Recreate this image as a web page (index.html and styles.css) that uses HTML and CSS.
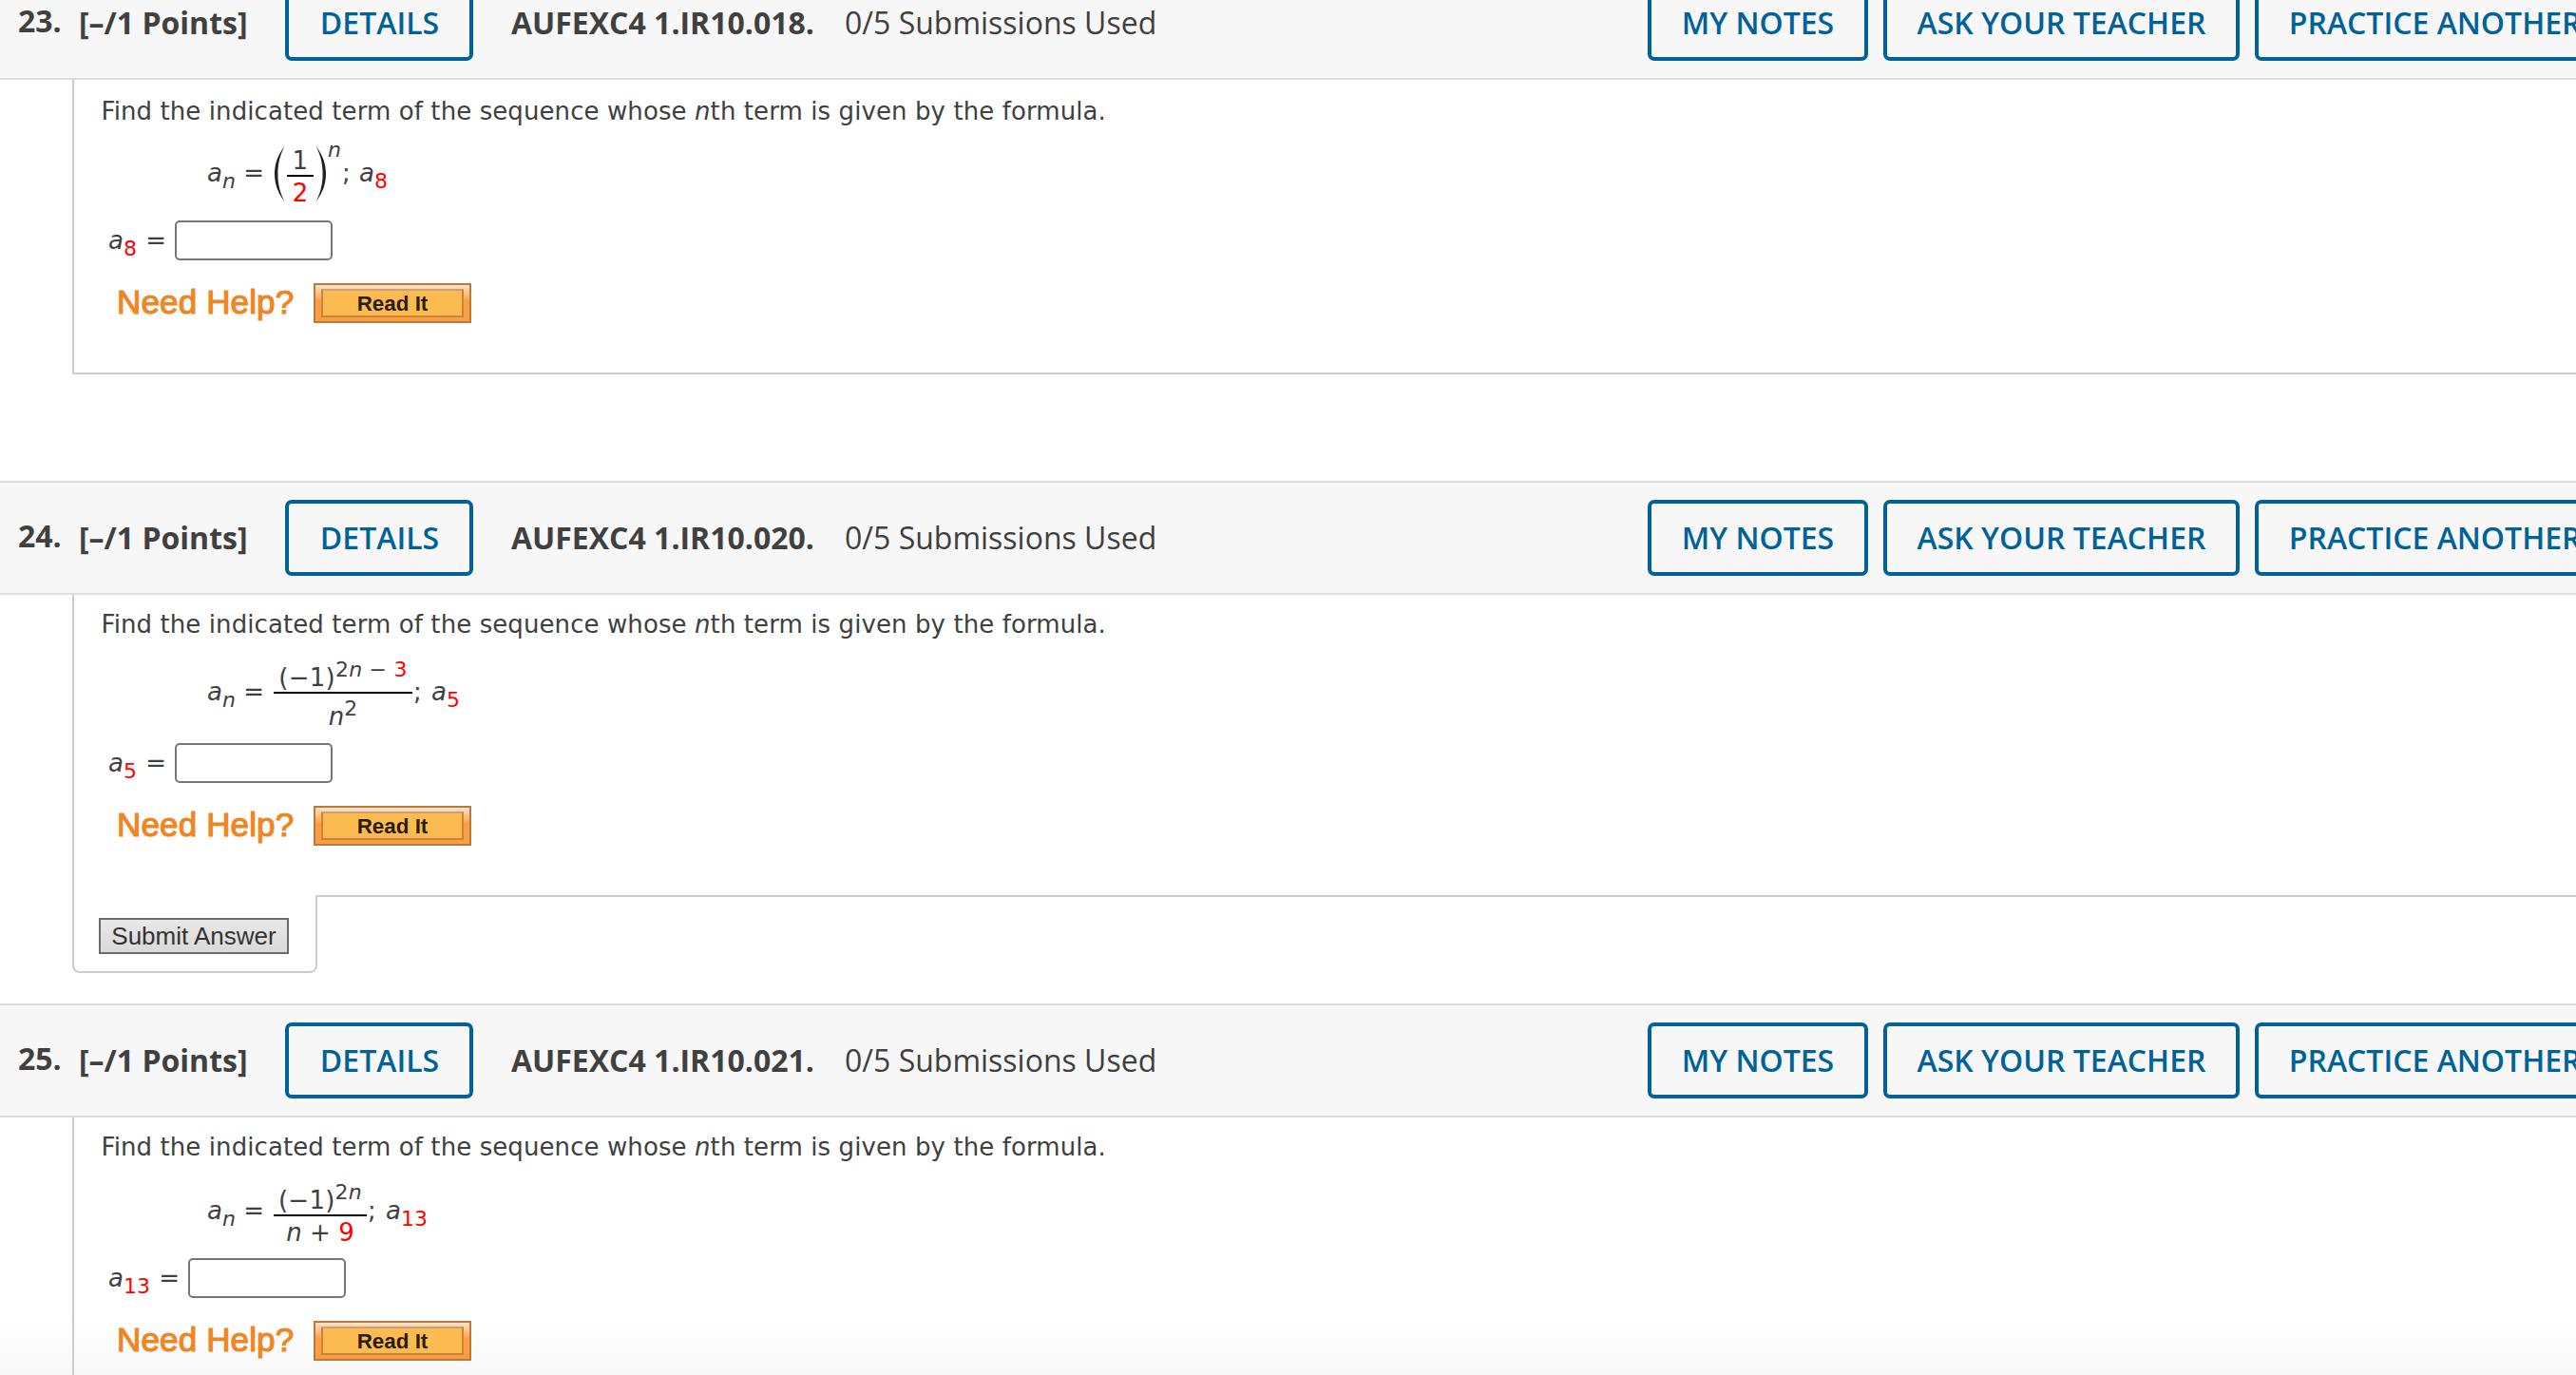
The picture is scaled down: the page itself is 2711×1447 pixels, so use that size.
FILE: index.html
```html
<!DOCTYPE html>
<html lang="en">
<head>
  <meta charset="UTF-8" />
  <meta name="viewport" content="width=device-width, initial-scale=1.0"/>
  <title>Sequences Homework</title>
  <link rel="stylesheet" href="styles.css">
</head>
<body>

<main class="assignment">

  <!-- Question 23 -->
  <section class="question q23">
    <header class="question-header">
      <span class="number">23.</span>
      <span class="points">[–/1 Points]</span>
      <button type="button" class="btn details">DETAILS</button>
      <span class="code">AUFEXC4 1.IR10.018.</span>
      <span class="used">0/5 Submissions Used</span>
      <div class="actions">
        <button type="button" class="btn">MY NOTES</button>
        <button type="button" class="btn">ASK YOUR TEACHER</button>
        <button type="button" class="btn">PRACTICE ANOTHER</button>
      </div>
    </header>
    <div class="question-body closed">
      <p class="prompt">Find the indicated term of the sequence whose <i>n</i>th term is given by the formula.</p>
      <div class="equation">
        <span class="side"><i>a</i><sub><i>n</i></sub> =</span>
        <svg class="paren" width="12" height="60" viewBox="0 0 12 60"><path d="M11.5 1C-2.5 18 -2.5 42 11.5 59C2 42 2 18 11.5 1Z"/></svg>
        <span class="fraction">
          <span class="top">1</span>
          <span class="bottom red">2</span>
        </span>
        <svg class="paren" width="12" height="60" viewBox="0 0 12 60"><path d="M0.5 1C14.5 18 14.5 42 0.5 59C10 42 10 18 0.5 1Z"/></svg>
        <span class="power"><i>n</i></span>
        <span class="side end">; <i>a</i><sub class="red">8</sub></span>
      </div>
      <div class="answer">
        <label for="a8"><i>a</i><sub class="red">8</sub> =</label>
        <input type="text" id="a8" />
      </div>
      <div class="help">
        <span class="help-title">Need Help?</span>
        <button type="button" class="read-it"><span>Read It</span></button>
      </div>
    </div>
  </section>

  <!-- Question 24 -->
  <section class="question q24">
    <header class="question-header">
      <span class="number">24.</span>
      <span class="points">[–/1 Points]</span>
      <button type="button" class="btn details">DETAILS</button>
      <span class="code">AUFEXC4 1.IR10.020.</span>
      <span class="used">0/5 Submissions Used</span>
      <div class="actions">
        <button type="button" class="btn">MY NOTES</button>
        <button type="button" class="btn">ASK YOUR TEACHER</button>
        <button type="button" class="btn">PRACTICE ANOTHER</button>
      </div>
    </header>
    <div class="question-body">
      <p class="prompt">Find the indicated term of the sequence whose <i>n</i>th term is given by the formula.</p>
      <div class="equation">
        <span class="side"><i>a</i><sub><i>n</i></sub> =</span>
        <span class="fraction">
          <span class="top">(−1)<sup>2<i>n</i> − <span class="red">3</span></sup></span>
          <span class="bottom"><i>n</i><sup>2</sup></span>
        </span>
        <span class="side end">; <i>a</i><sub class="red">5</sub></span>
      </div>
      <div class="answer">
        <label for="a5"><i>a</i><sub class="red">5</sub> =</label>
        <input type="text" id="a5" />
      </div>
      <div class="help">
        <span class="help-title">Need Help?</span>
        <button type="button" class="read-it"><span>Read It</span></button>
      </div>
    </div>
    <div class="submit-row">
      <div class="submit-tab">
        <button type="submit" class="submit">Submit Answer</button>
      </div>
      <div class="submit-line"></div>
    </div>
  </section>

  <!-- Question 25 -->
  <section class="question q25">
    <header class="question-header">
      <span class="number">25.</span>
      <span class="points">[–/1 Points]</span>
      <button type="button" class="btn details">DETAILS</button>
      <span class="code">AUFEXC4 1.IR10.021.</span>
      <span class="used">0/5 Submissions Used</span>
      <div class="actions">
        <button type="button" class="btn">MY NOTES</button>
        <button type="button" class="btn">ASK YOUR TEACHER</button>
        <button type="button" class="btn">PRACTICE ANOTHER</button>
      </div>
    </header>
    <div class="question-body">
      <p class="prompt">Find the indicated term of the sequence whose <i>n</i>th term is given by the formula.</p>
      <div class="equation">
        <span class="side"><i>a</i><sub><i>n</i></sub> =</span>
        <span class="fraction">
          <span class="top">(−1)<sup>2<i>n</i></sup></span>
          <span class="bottom"><i>n</i> + <span class="red">9</span></span>
        </span>
        <span class="side end">; <i>a</i><sub class="red">13</sub></span>
      </div>
      <div class="answer">
        <label for="a13"><i>a</i><sub class="red">13</sub> =</label>
        <input type="text" id="a13" />
      </div>
      <div class="help">
        <span class="help-title">Need Help?</span>
        <button type="button" class="read-it"><span>Read It</span></button>
      </div>
    </div>
  </section>

</main>

</body>
</html>
```
FILE: styles.css
```css
:root {
  --blue: #006298;
  --text: #404040;
  --line: #ccc;
  --header-bg: #f7f7f7;
  --header-line: #ddd;
}

* {
  box-sizing: border-box;
  margin: 0;
  padding: 0;
}

body {
  background: #fff;
  color: var(--text);
  font-family: Verdana, "DejaVu Sans", sans-serif;
  font-size: 26px;
  line-height: 32px;
  overflow: hidden;
}

.assignment {
  height: 1447px;
  overflow: hidden;
  background: linear-gradient(#fff 1385px, #f8f8f8 1447px);
}

/* Header bar */
.question-header {
  display: flex;
  align-items: center;
  height: 120px;
  padding-left: 19px;
  background: var(--header-bg);
  border-top: 2px solid var(--header-line);
  border-bottom: 2px solid var(--header-line);
  font-family: "Open Sans", sans-serif;
  font-size: 32px;
  line-height: 44px;
  white-space: nowrap;
}

.number {
  width: 64px;
  margin-top: -4px;
  font-weight: 700;
}

.points {
  width: 217px;
  font-weight: 700;
}

.btn {
  height: 80px;
  flex: none;
  border: 4px solid var(--blue);
  border-radius: 7px;
  background: transparent;
  color: var(--blue);
  font-family: inherit;
  font-size: 32px;
  font-weight: 600;
  line-height: 44px;
  padding: 0 31.7px;
  cursor: pointer;
}

.details {
  width: 198px;
  padding: 0 0 0 1px;
}

.code {
  margin-left: 40px;
  width: 351px;
  font-weight: 700;
}

.actions {
  display: flex;
  gap: 16px;
  margin-left: auto;
  width: 977px;
}

/* Question content */
.q23 {
  margin: -36px 0 112px;
}

.q24 {
  margin-bottom: 32px;
}

.question-body {
  margin-left: 76px;
  padding: 15px 0 52px 28px;
  border-left: 2px solid var(--line);
}

.q23 .question-body {
  padding-top: 17px;
}

.closed {
  border-bottom: 2px solid var(--line);
}

.prompt {
  padding-left: 0.5px;
  letter-spacing: 0.09px;
  white-space: nowrap;
}

sub,
sup {
  font-size: 22px;
  line-height: 0;
}

sub {
  vertical-align: -7px;
}

sup {
  vertical-align: 10px;
}

.red {
  color: #f00;
}

.equation {
  display: flex;
  align-items: flex-start;
  padding-left: 112px;
  white-space: nowrap;
}

.side {
  width: 70px;
}

.end {
  width: auto;
  padding-left: 1px;
  word-spacing: 2px;
}

.fraction {
  display: flex;
  flex-direction: column;
  align-items: center;
}

.fraction .top {
  padding-top: 2px;
  border-bottom: 2px solid #000;
  letter-spacing: 0.25px;
  line-height: 30px;
  text-align: center;
}

.fraction .bottom {
  margin-top: 1px;
}

.paren {
  fill: #222;
}

.q23 .equation {
  height: 99px;
}

.q23 .side {
  margin-top: 33px;
}

.q23 .paren {
  margin-top: 20px;
}

.q23 .fraction {
  width: 28px;
  margin: 19px 2px 0;
}

.q23 .top {
  width: 28px;
}

.q23 .end {
  padding-left: 0;
  word-spacing: 1px;
}

.power {
  width: 15px;
  margin: 9px 0 0 1px;
  font-size: 22px;
}

.q24 .equation {
  height: 109px;
}

.q24 .side {
  margin-top: 39px;
}

.q24 .fraction {
  margin-top: 23px;
}

.q24 .top {
  width: 146px;
}

.q24 .bottom {
  margin-top: 8px;
}

.q25 .equation {
  height: 101px;
}

.q25 .side {
  margin-top: 35px;
}

.q25 .fraction {
  margin-top: 23px;
}

.q25 .top {
  width: 98px;
}

/* Answer row */
.answer {
  display: flex;
  height: 42px;
  padding-left: 8px;
  gap: 9px;
}

.answer label {
  margin-top: 5px;
  word-spacing: 1px;
}

.answer input {
  width: 166px;
  height: 42px;
  border: 2px solid #767676;
  border-radius: 5px;
  background: #fff;
}

/* Help row */
.help {
  display: flex;
  align-items: center;
  height: 42px;
  margin-top: 24px;
  padding-left: 17px;
  font-family: "Liberation Sans", Arial, sans-serif;
}

.help-title {
  width: 207px;
  margin-top: -2px;
  color: #f08523;
  font-size: 35px;
  letter-spacing: 0.15px;
  -webkit-text-stroke: 1.2px #f08523;
}

.read-it {
  width: 166px;
  height: 42px;
  padding: 4px 6px;
  border: 2px solid #b97a3c;
  background: linear-gradient(#fde3cb, #fb9e43 45%);
  cursor: pointer;
}

.read-it span {
  display: block;
  height: 30px;
  border: 2px solid #c98435;
  border-top-color: #c9a07a;
  background: #fcbb50;
  color: #2b1c05;
  font-family: "Liberation Sans", Arial, sans-serif;
  font-size: 22.4px;
  font-weight: 700;
  line-height: 28px;
}

/* Submit tab under the question */
.submit-row {
  display: flex;
  margin-left: 76px;
}

.submit-tab {
  width: 258px;
  height: 82px;
  padding: 24px 0 0 26px;
  border: 2px solid var(--line);
  border-top: 0;
  border-radius: 0 0 8px 8px;
}

.submit-line {
  flex: 1;
  height: 2px;
  margin-left: -2px;
  background: var(--line);
}

.submit {
  display: block;
  width: 200px;
  height: 38px;
  border: 2px solid #6b6b6b;
  background: linear-gradient(#e8e8e8, #d9d9d9);
  color: #333;
  font-family: "Liberation Sans", Arial, sans-serif;
  font-size: 26px;
  cursor: pointer;
}
```
